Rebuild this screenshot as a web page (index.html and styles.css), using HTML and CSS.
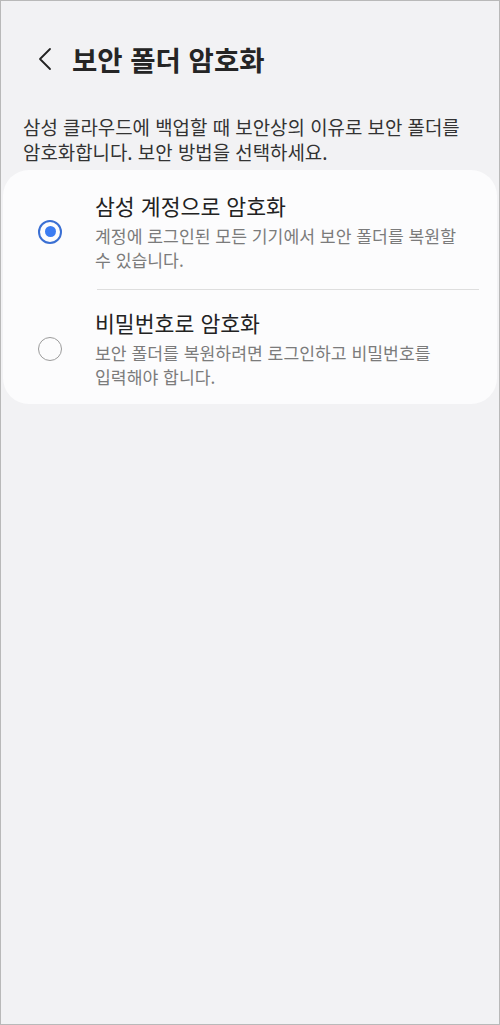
FILE: index.html
```html
<!DOCTYPE html>
<html lang="ko">
<head>
<meta charset="utf-8">
<link rel="stylesheet" href="styles.css">
</head>
<body>
<div class="screen">
  <header class="appbar">
    <svg class="back" width="14" height="24" viewBox="0 0 14 24"><path d="M12 2 L2 12 L12 22" fill="none" stroke="#222" stroke-width="1.8" stroke-linecap="round" stroke-linejoin="round"/></svg>
    <h1 class="title">보안 폴더 암호화</h1>
  </header>
  <p class="desc">삼성 클라우드에 백업할 때 보안상의 이유로 보안 폴더를 암호화합니다. 보안 방법을 선택하세요.</p>
  <div class="card">
    <div class="option">
      <span class="radio checked"></span>
      <div class="text">
        <div class="opt-title">삼성 계정으로 암호화</div>
        <div class="opt-sub">계정에 로그인된 모든 기기에서 보안 폴더를 복원할 수 있습니다.</div>
      </div>
    </div>
    <div class="divider"></div>
    <div class="option second">
      <span class="radio"></span>
      <div class="text">
        <div class="opt-title">비밀번호로 암호화</div>
        <div class="opt-sub">보안 폴더를 복원하려면 로그인하고 비밀번호를 입력해야 합니다.</div>
      </div>
    </div>
  </div>
</div>
</body>
</html>
```

FILE: styles.css
```css
* { box-sizing: border-box; }
html, body { margin: 0; padding: 0; }
body {
  font-family: "Noto Sans CJK KR", "Noto Sans", sans-serif;
  word-break: keep-all;
}
.screen {
  width: 500px;
  height: 1025px;
  background: #f2f2f4;
  border: 1px solid #b9b9b9;
  padding: 0 2px;
  overflow: hidden;
}
.appbar {
  display: flex;
  align-items: center;
  height: 60px;
  margin-top: 28px;
  padding-left: 35px;
}
.back { display: block; }
.title {
  margin: 0 0 0 20px;
  font-size: 27.5px;
  font-weight: 700;
  color: #252525;
}
.desc {
  margin: 25px 0 0 0;
  padding: 0 20px;
  font-size: 18.9px;
  line-height: 25px;
  color: #333;
}
.card {
  margin-top: 6px;
  background: #fcfcfd;
  border-radius: 26px;
}
.option {
  display: flex;
  align-items: center;
  padding: 22px 0 18px 0;
}
.option.second { padding: 19px 0 16px 0; }
.radio {
  flex: none;
  width: 24px;
  height: 24px;
  border-radius: 50%;
  border: 1.6px solid #9b9b9b;
  margin: 0 33px 0 35px;
  position: relative;
}
.radio.checked {
  border: 2.3px solid #3a6fd3;
}
.radio.checked::after {
  content: "";
  position: absolute;
  left: 50%;
  top: 50%;
  width: 11px;
  height: 11px;
  margin: -5.5px 0 0 -5.5px;
  border-radius: 50%;
  background: #3b7cf2;
}
.text { flex: 1; padding-right: 32px; }
.opt-title {
  font-size: 21.6px;
  line-height: 28px;
  color: #222;
}
.opt-sub {
  margin-top: 4px;
  font-size: 17.2px;
  line-height: 23.5px;
  color: #7b7b7b;
}
.divider {
  height: 1px;
  background: #dedede;
  margin: 0 18px 0 94px;
}
```
